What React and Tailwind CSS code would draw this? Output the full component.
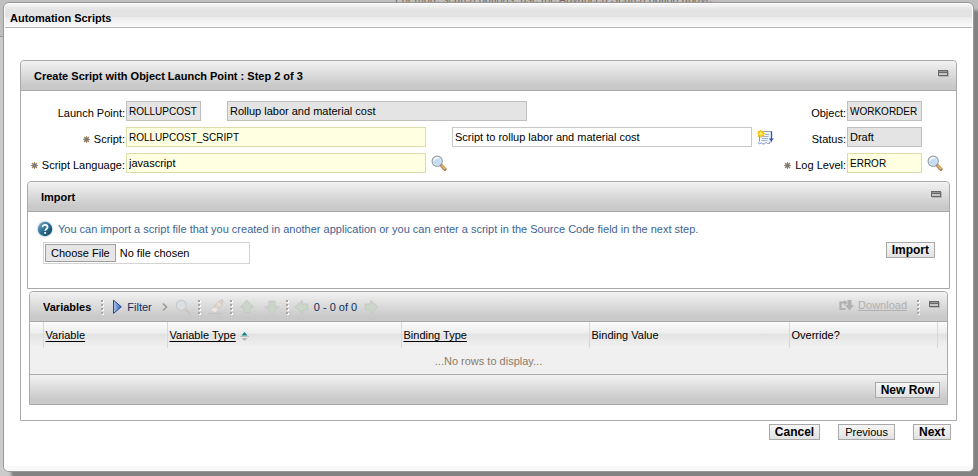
import React from 'react';

const COLUMNS = [
    { label: '', width: 'w-[13px]' },
    { label: 'Variable', width: 'w-[124px]', sortable: true },
    { label: 'Variable Type', width: 'w-[234px]', sortable: true, sorted: true },
    { label: 'Binding Type', width: 'w-[188px]', sortable: true },
    { label: 'Binding Value', width: 'w-[200px]' },
    { label: 'Override?', width: 'w-[148px]' },
    { label: '', width: 'w-[10px]' },
];

const FIELD_TONES = {
    readonly: 'border-[#bfbfbf] bg-[#e4e4e4]',
    required: 'border-[#dcdcaa] bg-[#ffffe1]',
    normal: 'border-[#c8c8c8] bg-white',
};

/* ICONS */

const RequiredMark = () => (
    <svg width="7" height="7" viewBox="0 0 7 7" className="mr-1 shrink-0" aria-hidden="true">
        <path d="M3.5 0v7M0 3.5h7" stroke="#b08a55" strokeWidth="1" />
        <path d="M1 1l5 5M6 1L1 6" stroke="#a08a68" strokeWidth="1.3" />
        <rect x="1.6" y="1.6" width="3.8" height="3.8" fill="#7c7c80" />
    </svg>
);

const SearchIcon = () => (
    <svg width="16" height="16" viewBox="0 0 16 16" aria-hidden="true">
        <path d="M10 10l4 4.3" stroke="#8f7a5e" strokeWidth="3.2" strokeLinecap="round" />
        <path d="M10.8 10.6l3 3.2" stroke="#f0b450" strokeWidth="1.8" strokeLinecap="round" />
        <circle cx="6.2" cy="6.2" r="5" fill="#c3dcf3" stroke="#8c9199" strokeWidth="1.3" />
        <circle cx="6.2" cy="6.2" r="4.1" fill="none" stroke="#e9f1f8" strokeWidth="0.8" />
        <path d="M3.4 5.4a3 3 0 0 1 4.6-2" stroke="#fff" strokeWidth="1.2" fill="none" />
    </svg>
);

const LongDescriptionIcon = () => (
    <svg width="17" height="17" viewBox="0 0 17 17" aria-hidden="true">
        <path d="M2.5 2.5h12v10.5l-2 0v1.5h-2l-1.5-1.2-1.5 1.7h-2l-1-1.2-2 1.2-1-1.5 1-1z" fill="#f1f5fd" stroke="#8c9bc6" />
        <path d="M8 5.5h4M5 7.5h6.5M5 9.5h6M4.5 11.5h6" stroke="#9fb0d8" />
        <path d="M14.5 2.5v8" stroke="#2c55ad" strokeWidth="1.3" />
        <path d="M11.8 9.5h5L14.3 12.6z" fill="#2c55ad" />
        <path d="M4 0l1.1 2.5L7.6 1.4 6.6 3.8 8.6 4.6 6.6 5.5l1 2.4-2.5-1L4 9.2 3 6.9.5 7.9l.9-2.4L0 4.6l1.4-.8L.5 1.4 3 2.5z" fill="#f7c000" />
        <path d="M4 2.8v3.8M2.1 4.7h3.8" stroke="#fff27a" strokeWidth="1.4" />
    </svg>
);

const HelpIcon = () => (
    <svg width="18" height="18" viewBox="0 0 18 18" className="shrink-0" aria-hidden="true">
        <defs>
            <linearGradient id="help" x1="0" y1="0" x2="1" y2="1">
                <stop offset="0" stopColor="#7fb2c9" />
                <stop offset="0.5" stopColor="#2a6d92" />
                <stop offset="1" stopColor="#123f5e" />
            </linearGradient>
        </defs>
        <circle cx="9" cy="9" r="8.5" fill="#dfeaf0" />
        <circle cx="9" cy="9" r="7.2" fill="url(#help)" />
        <path d="M6.6 7.2c0-3.2 5-3 5 0 0 1.8-2.4 1.8-2.4 3.6" fill="none" stroke="#fff" strokeWidth="1.7" />
        <rect x="8.3" y="12" width="1.8" height="1.8" fill="#fff" />
    </svg>
);

const MinimizeIcon = () => (
    <svg width="12" height="8" viewBox="0 0 12 8" aria-hidden="true">
        <rect x="1" y="1" width="10" height="6" fill="#b4b4b4" />
        <rect x="0" y="0" width="10" height="6" fill="#686868" />
        <rect x="1" y="1" width="8" height="1" fill="#989898" />
        <rect x="1" y="3" width="8" height="2" fill="#c6c6c6" />
    </svg>
);

const PlayIcon = () => (
    <svg width="10" height="16" viewBox="0 0 10 16" aria-hidden="true">
        <defs>
            <linearGradient id="play" x1="0" y1="0" x2="1" y2="0">
                <stop offset="0" stopColor="#a8c6ee" />
                <stop offset="1" stopColor="#2e5fb4" />
            </linearGradient>
        </defs>
        <path d="M0.5 1.2v13.2L8.3 7.8z" fill="url(#play)" stroke="#27498c" />
    </svg>
);

const GhostSearchIcon = () => (
    <svg width="16" height="16" viewBox="0 0 16 16" aria-hidden="true">
        <path d="M10.5 10.5l4 4" stroke="#cbc6bd" strokeWidth="2.4" strokeLinecap="round" />
        <circle cx="6.3" cy="6.3" r="5" fill="#dcdfe1" stroke="#c6c9cb" strokeWidth="1.1" />
    </svg>
);

const GhostEraserIcon = () => (
    <svg width="16" height="16" viewBox="0 0 16 16" aria-hidden="true">
        <path d="M0 14.5h15" stroke="#c3c3c3" strokeWidth="1.2" />
        <path d="M3 11.5l6-7.5 5-3.4 1 1-1 4.6-6.4 6.8z" fill="#dbd5cc" stroke="#c6c2bd" strokeWidth="0.8" />
        <path d="M3 11.5L5.4 8.4l4.4 2.2-2.4 2.8z" fill="#ece7e6" />
        <path d="M9 4l4 2.6" stroke="#eee3cc" strokeWidth="1.4" />
    </svg>
);

const GhostArrowIcon = ({ turn = 0 }) => (
    <svg width="16" height="16" viewBox="0 0 16 16" aria-hidden="true">
        <path
            d="M8 1.2l6.6 7H11v5.6H5V8.2H1.4z"
            fill="#cbd5c9"
            stroke="#bfc8bd"
            strokeWidth="0.9"
            strokeLinejoin="round"
            transform={`rotate(${turn} 8 8)`}
        />
    </svg>
);

const DownloadIcon = () => (
    <svg width="15" height="12" viewBox="0 0 15 12" aria-hidden="true">
        <path d="M1.5 11V3.5h6M1.5 10h5" fill="none" stroke="#b0b0b0" strokeWidth="2.2" />
        <path d="M5 1l3.5 2.8L5 6.6z" fill="#b0b0b0" />
        <path d="M8.5 1h4v5H15l-4.5 5.5L6 6h2.5z" fill="#b0b0b0" />
    </svg>
);

const SortIcon = () => (
    <svg width="9" height="10" viewBox="0 0 9 10" className="mt-1 ml-1" aria-hidden="true">
        <path d="M4.5 0L7.5 3.4h-6z" fill="#0d8080" />
        <path d="M0 4.5h9" stroke="#c0c0c0" />
        <path d="M4.5 9L7.5 6h-6z" fill="#b5b5b5" />
    </svg>
);

const Separator = () => (
    <svg width="4" height="16" viewBox="0 0 4 16" aria-hidden="true">
        {[1, 5, 9, 13].map((y) => (
            <g key={y}>
                <rect x="1" y={y + 1} width="2" height="2" fill="#fff" />
                <rect x="0" y={y} width="2" height="2" fill="#a9a59d" />
            </g>
        ))}
    </svg>
);

/* SHARED PIECES */

const TextBox = ({ id, value, tone, width, label, size = '' }) => (
    <input
        id={id}
        type="text"
        aria-label={label}
        defaultValue={value}
        readOnly={tone === 'readonly'}
        className={`h-5 border pl-[2px] outline-none ${width} ${size} ${FIELD_TONES[tone]}`}
    />
);

const Field = ({ id, label, required, value, tone, size, width = 'w-[75px]', labelWidth = '' }) => (
    <div className="flex items-center">
        <label
            htmlFor={id}
            className={`flex items-center justify-end whitespace-nowrap pt-1 pr-px ${labelWidth}`}
        >
            {required && <RequiredMark />}
            {label}
        </label>
        <TextBox id={id} value={value} tone={tone} width={width} size={size} />
    </div>
);

const IconButton = ({ label, children, className = '' }) => (
    <button type="button" aria-label={label} className={`flex shrink-0 ${className}`}>
        {children}
    </button>
);

const PushButton = ({ children, bold = true }) => (
    <button
        type="button"
        className={`h-4 border border-[#a9a9a9] bg-linear-to-b from-[#f6f6f6] to-[#e2e2e2] leading-[14px] ${bold ? 'px-[5px] text-[12px] font-bold' : 'px-[6px]'}`}
    >
        {children}
    </button>
);

const PanelHeader = ({ title, className = '', children }) => (
    <div className={`flex h-[30px] items-center border-b border-[#a9a9a9] bg-linear-to-b from-[#f2f2f2] to-[#c9c9c9] to-85% ${className}`}>
        <h2 className="font-bold">{title}</h2>
        {children}
    </div>
);

/* SECTIONS */

const ScriptForm = () => (
    <form className="flex justify-between pt-[10px] pb-2 pr-[13px]">
        <div className="flex flex-col gap-[6px]">
            <div className="flex items-center gap-[26px]">
                <Field id="launchpoint" label="Launch Point:" value="ROLLUPCOST" tone="readonly" size="text-[10px]" labelWidth="w-[105px]" />
                <TextBox label="Launch point description" value="Rollup labor and material cost" tone="readonly" width="w-[300px]" />
            </div>
            <div className="flex items-center">
                <Field id="script" label="Script:" required value="ROLLUPCOST_SCRIPT" tone="required" size="text-[10px]" width="w-[300px]" labelWidth="w-[105px]" />
                <div className="ml-[26px] flex items-center gap-[5px]">
                    <TextBox label="Script description" value="Script to rollup labor and material cost" tone="normal" width="w-[300px]" />
                    <IconButton label="Long description"><LongDescriptionIcon /></IconButton>
                </div>
            </div>
            <div className="flex items-center gap-[5px]">
                <Field id="language" label="Script Language:" required value="javascript" tone="required" width="w-[300px]" labelWidth="w-[105px]" />
                <IconButton label="Select language"><SearchIcon /></IconButton>
            </div>
        </div>

        <div className="flex flex-col items-end gap-[6px]">
            <div className="pr-[21px]">
                <Field id="object" label="Object:" value="WORKORDER" tone="readonly" size="text-[10px]" />
            </div>
            <div className="pr-[21px]">
                <Field id="status" label="Status:" value="Draft" tone="readonly" />
            </div>
            <div className="flex items-center gap-[5px]">
                <Field id="loglevel" label="Log Level:" required value="ERROR" tone="required" size="text-[10px]" />
                <IconButton label="Select log level"><SearchIcon /></IconButton>
            </div>
        </div>
    </form>
);

const ImportPanel = () => (
    <section className="ml-[6px] mr-[6px] rounded-t border border-[#a9a9a9]">
        <PanelHeader title="Import" className="justify-between rounded-t pl-[13px] pr-[6px]">
            <IconButton label="Minimize" className="pb-1"><MinimizeIcon /></IconButton>
        </PanelHeader>
        <div className="flex flex-col pt-2 pb-6 pl-2 pr-[14px]">
            <p className="flex items-center gap-1 text-[#3c6494]">
                <HelpIcon />
                You can import a script file that you created in another application or you can enter a script in the Source Code field in the next step.
            </p>
            <div className="mt-1 flex items-start justify-between pl-[7px]">
                <input
                    type="file"
                    aria-label="Script file"
                    className="h-[22px] w-[207px] border border-[#d4d4d4] p-px file:mr-1 file:h-[18px] file:border file:border-solid file:border-[#a0a0a0] file:bg-[#e6e6e6] file:px-[5px] file:leading-4"
                />
                <PushButton>Import</PushButton>
            </div>
        </div>
    </section>
);

const VariablesPanel = () => (
    <section className="mx-2 mt-[2px] rounded-t border border-[#a9a9a9]">
        <PanelHeader title="Variables" className="rounded-t pl-[13px] pr-[6px]">
            <div className="ml-[10px] flex items-center text-[#0e2f5c]">
                <Separator />
                <button type="button" className="ml-2 flex items-center gap-1">
                    <PlayIcon />
                    Filter
                </button>
                <svg width="6" height="8" viewBox="0 0 6 8" className="ml-[10px]" aria-hidden="true">
                    <path d="M1 0.5L4.6 4 1 7.5" fill="none" stroke="#9b958a" strokeWidth="1.4" />
                </svg>
                <IconButton label="Find" className="mx-[7px]"><GhostSearchIcon /></IconButton>
                <Separator />
                <IconButton label="Clear filter" className="mx-[6px]"><GhostEraserIcon /></IconButton>
                <Separator />
                <IconButton label="Previous row" className="ml-[5px]"><GhostArrowIcon /></IconButton>
                <IconButton label="Next row" className="ml-[9px] mr-[6px]"><GhostArrowIcon turn={180} /></IconButton>
                <Separator />
                <IconButton label="Previous page" className="mx-1"><GhostArrowIcon turn={-90} /></IconButton>
                <span>0 - 0 of 0</span>
                <IconButton label="Next page" className="ml-[6px]"><GhostArrowIcon turn={90} /></IconButton>
            </div>
            <div className="ml-auto flex items-center">
                <a href="#download" className="flex items-center gap-1 pb-1 text-[#b0b0b0] underline">
                    <DownloadIcon />
                    Download
                </a>
                <span className="ml-[10px] mr-2"><Separator /></span>
                <IconButton label="Minimize" className="pb-1"><MinimizeIcon /></IconButton>
            </div>
        </PanelHeader>

        <table className="w-full table-fixed border-collapse bg-[#f0f0f0]">
            <thead>
                <tr className="h-[26px] bg-[linear-gradient(#fcfcfc_0%,#ececec_44%,#e2e2e2_45%,#f2f2f2_100%)]">
                    {COLUMNS.map((col, i) => (
                        <th
                            key={i}
                            className={`${col.width} p-0 pl-[2px] text-left font-normal ${i > 0 ? 'border-l border-[#d9d9d9]' : ''}`}
                        >
                            <span className="flex items-center">
                                <span className={col.sortable ? 'underline underline-offset-2' : ''}>{col.label}</span>
                                {col.sorted && <SortIcon />}
                            </span>
                        </th>
                    ))}
                </tr>
            </thead>
            <tbody>
                <tr className="h-[26px]">
                    <td colSpan={COLUMNS.length} className="p-0 text-center text-[#8d7b68]">
                        ...No rows to display...
                    </td>
                </tr>
            </tbody>
        </table>

        <div className="flex h-[30px] items-center justify-end border-t border-[#a9a9a9] bg-linear-to-b from-[#f2f2f2] to-[#c9c9c9] to-85% pr-[7px]">
            <PushButton>New Row</PushButton>
        </div>
    </section>
);

const App = () => {
    return (
        <div className="relative min-h-screen overflow-hidden bg-[#cbcbcb] font-['Liberation_Sans',Arial,sans-serif] text-[11px] leading-[14px] text-black">

            {/* PAGE BEHIND THE DIALOG */}
            <div className="absolute inset-x-0 top-0 h-[37px] overflow-hidden border-b border-[#999] bg-[#bfbfbf]">
                <p className="-mt-2 ml-[395px] whitespace-nowrap text-[#7d6b58]">
                    For more search options, use the Advanced Search option above.
                </p>
            </div>

            {/* DIALOG */}
            <main className="relative mt-[2px] mr-[4px] ml-[3px] rounded-md border border-[#999] bg-white shadow-[8px_8px_3px_#838383]">
                <header className="mx-px mt-px flex h-6 items-center rounded-t border-b border-[#b5b5b5] bg-[linear-gradient(#f6f6f6_0%,#e3e3e3_25%,#e3e3e3_55%,#ebebeb_56%,#fafafa_100%)] pl-[5px] pt-1">
                    <h1 className="font-bold">Automation Scripts</h1>
                </header>

                <div className="px-4 pt-8">
                    <section className="rounded-t border border-[#a9a9a9] pb-[15px]">
                        <PanelHeader
                            title="Create Script with Object Launch Point : Step 2 of 3"
                            className="justify-between rounded-t pl-[13px] pr-[6px]"
                        >
                            <IconButton label="Minimize" className="pb-1"><MinimizeIcon /></IconButton>
                        </PanelHeader>
                        <ScriptForm />
                        <ImportPanel />
                        <VariablesPanel />
                    </section>

                    <div className="flex justify-end gap-[18px] pt-[3px] pr-[6px] pb-[26px]">
                        <PushButton>Cancel</PushButton>
                        <PushButton bold={false}>Previous</PushButton>
                        <PushButton>Next</PushButton>
                    </div>
                </div>
                <div className="h-[5px] rounded-b-md bg-[#f9f9f9]" />
            </main>
        </div>
    );
};

export default App;
